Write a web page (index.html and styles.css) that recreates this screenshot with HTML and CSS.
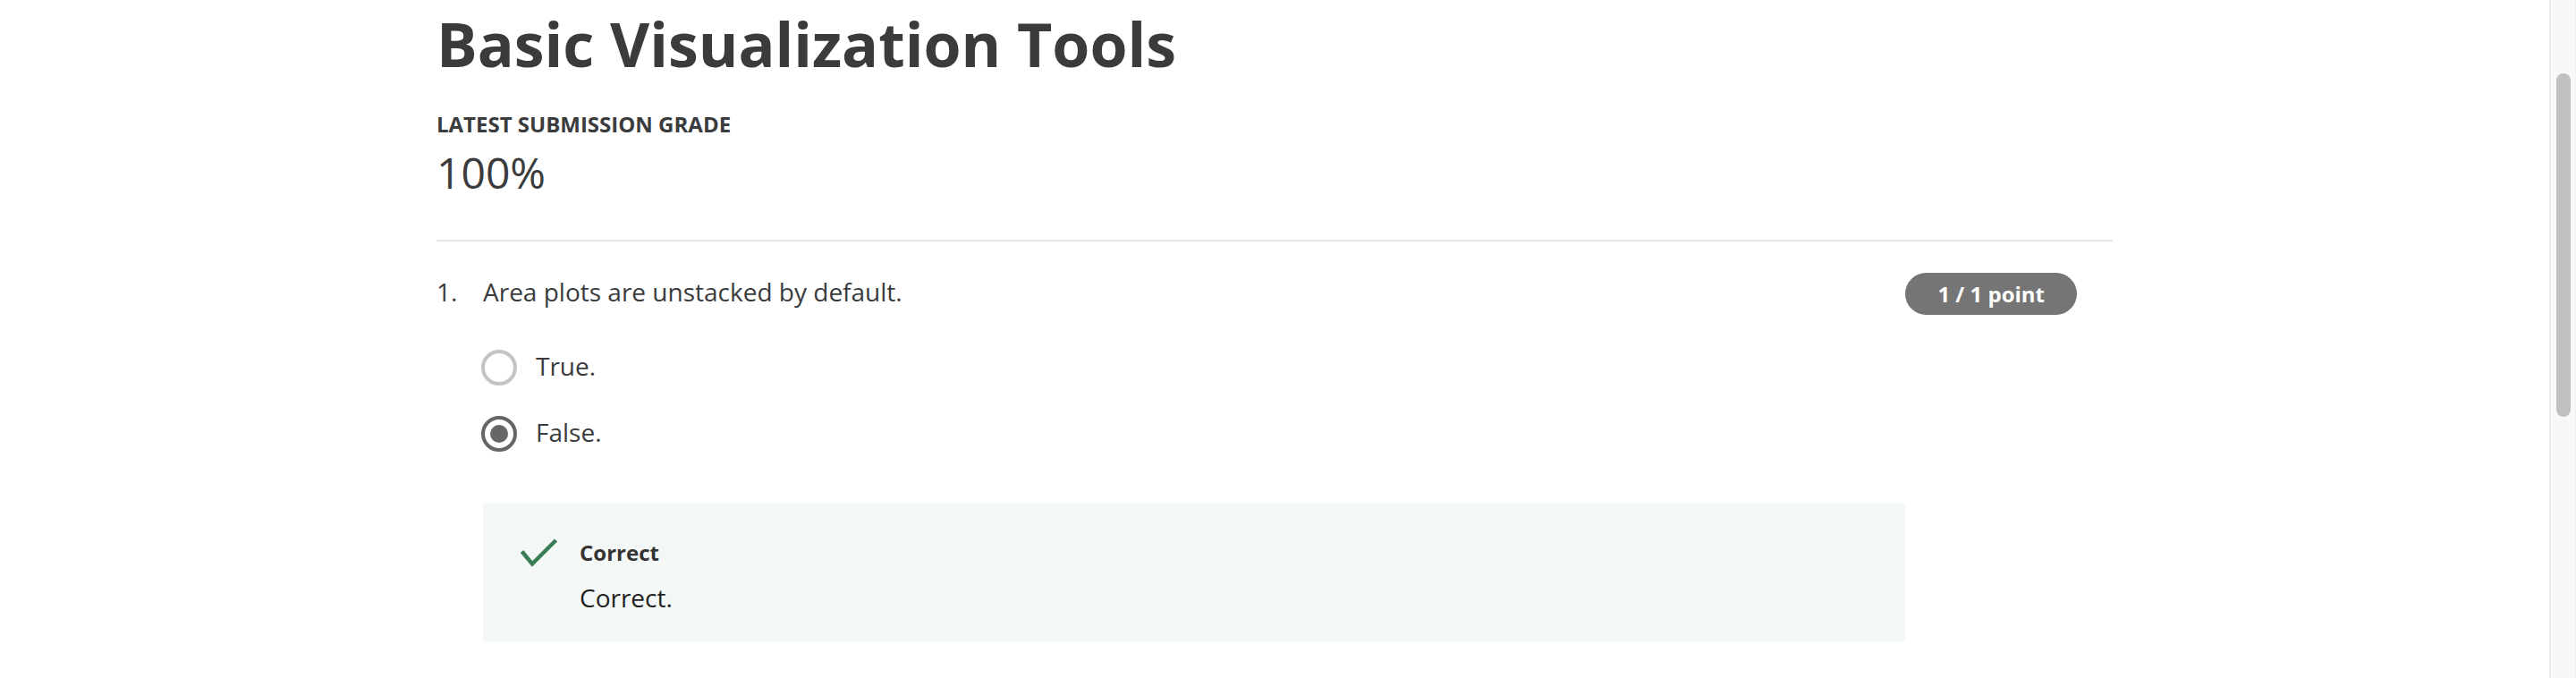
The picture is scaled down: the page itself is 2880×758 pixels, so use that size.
FILE: index.html
```html
<!DOCTYPE html>
<html lang="en">
<head>
<meta charset="utf-8">
<title>Basic Visualization Tools</title>
<link rel="stylesheet" href="styles.css">
</head>
<body>
<div class="page">
  <main class="main">
    <div class="container">
      <h1 class="title">Basic Visualization Tools</h1>
      <div class="grade-label">Latest Submission Grade</div>
      <div class="grade-value">100%</div>
      <hr class="divider">
      <section class="question">
        <div class="qnum">1.</div>
        <div class="qbody">
          <div class="qtext">Area plots are unstacked by default.</div>
          <div class="options">
            <div class="option">
              <span class="radio"></span>
              <span class="option-label">True.</span>
            </div>
            <div class="option">
              <span class="radio radio-checked"><span class="radio-dot"></span></span>
              <span class="option-label">False.</span>
            </div>
          </div>
          <div class="feedback">
            <svg class="check" width="45" height="36" viewBox="0 0 45 36" aria-hidden="true">
              <polyline points="3.5,15.5 15,29.5 41.5,3" fill="none" stroke="#3b7d56" stroke-width="4.5"/>
            </svg>
            <div class="feedback-text">
              <div class="feedback-title">Correct</div>
              <div class="feedback-body">Correct.</div>
            </div>
          </div>
        </div>
        <div class="points">1 / 1 point</div>
      </section>
    </div>
  </main>
  <aside class="scrollbar"><div class="thumb"></div></aside>
</div>
</body>
</html>
```
FILE: styles.css
```css
html, body {
  margin: 0;
  padding: 0;
  background: #ffffff;
}
body {
  font-family: "Open Sans", "Noto Sans", "Liberation Sans", sans-serif;
  color: #373a3c;
}
.page {
  display: flex;
  height: 758px;
  overflow: hidden;
}
.main {
  flex: 1;
  min-width: 0;
}
.container {
  width: 1874px;
  margin: 0 auto;
  padding-top: 7px;
}
.title {
  margin: 0;
  font-size: 68px;
  line-height: 84px;
  font-weight: 700;
  color: #3a3b3d;
}
.grade-label {
  margin-top: 33px;
  font-size: 24px;
  line-height: 30px;
  font-weight: 700;
  text-transform: uppercase;
  color: #3a3b3d;
}
.grade-value {
  margin-top: 7px;
  font-size: 48px;
  line-height: 64px;
  font-weight: 400;
  color: #3a3b3d;
}
.divider {
  margin: 43px 0 0 0;
  border: 0;
  height: 2px;
  background: #e5e5e5;
}
.question {
  display: flex;
  align-items: flex-start;
  margin-top: 36px;
}
.qnum {
  width: 52px;
  flex: none;
  font-size: 28px;
  line-height: 40px;
  color: #3a3b3d;
}
.qbody {
  flex: 1;
  min-width: 0;
}
.qtext {
  font-size: 28px;
  line-height: 40px;
  color: #3a3b3d;
}
.options {
  display: flex;
  flex-direction: column;
  gap: 34px;
  margin-top: 45px;
  margin-left: -2px;
}
.option {
  display: flex;
  align-items: flex-start;
  gap: 21px;
}
.radio {
  box-sizing: border-box;
  width: 40px;
  height: 40px;
  border: 4px solid #c4c4c4;
  border-radius: 50%;
  display: flex;
  align-items: center;
  justify-content: center;
  flex: none;
}
.radio-checked {
  border-color: #666666;
}
.radio-dot {
  width: 20px;
  height: 20px;
  border-radius: 50%;
  background: #666666;
}
.option-label {
  font-size: 28px;
  line-height: 36px;
  color: #3a3b3d;
}
.feedback {
  display: flex;
  align-items: flex-start;
  gap: 23px;
  margin-top: 58px;
  padding: 40px 0 29px 40px;
  background: #f3f8f6;
}
.check {
  display: block;
  margin-top: -2px;
  flex: none;
}
.feedback-title {
  font-size: 24px;
  line-height: 30px;
  font-weight: 700;
  color: #333333;
}
.feedback-body {
  margin-top: 15px;
  font-size: 28px;
  line-height: 40px;
  color: #1f1f1f;
}
.points {
  flex: none;
  margin-right: 40px;
  margin-top: -1px;
  height: 47px;
  padding: 0 36px;
  box-sizing: border-box;
  border-radius: 24px;
  background: #757575;
  color: #ffffff;
  font-size: 24px;
  font-weight: 700;
  line-height: 47px;
  white-space: nowrap;
}
.scrollbar {
  flex: none;
  width: 30px;
  box-sizing: border-box;
  border-left: 2px solid #ebebeb;
  border-right: 1px solid #f0f0f0;
  background: #f8f8f8;
  padding-top: 82px;
}
.thumb {
  width: 16px;
  height: 384px;
  margin-left: 6px;
  border-radius: 8px;
  background: #c1c1c1;
}
```
